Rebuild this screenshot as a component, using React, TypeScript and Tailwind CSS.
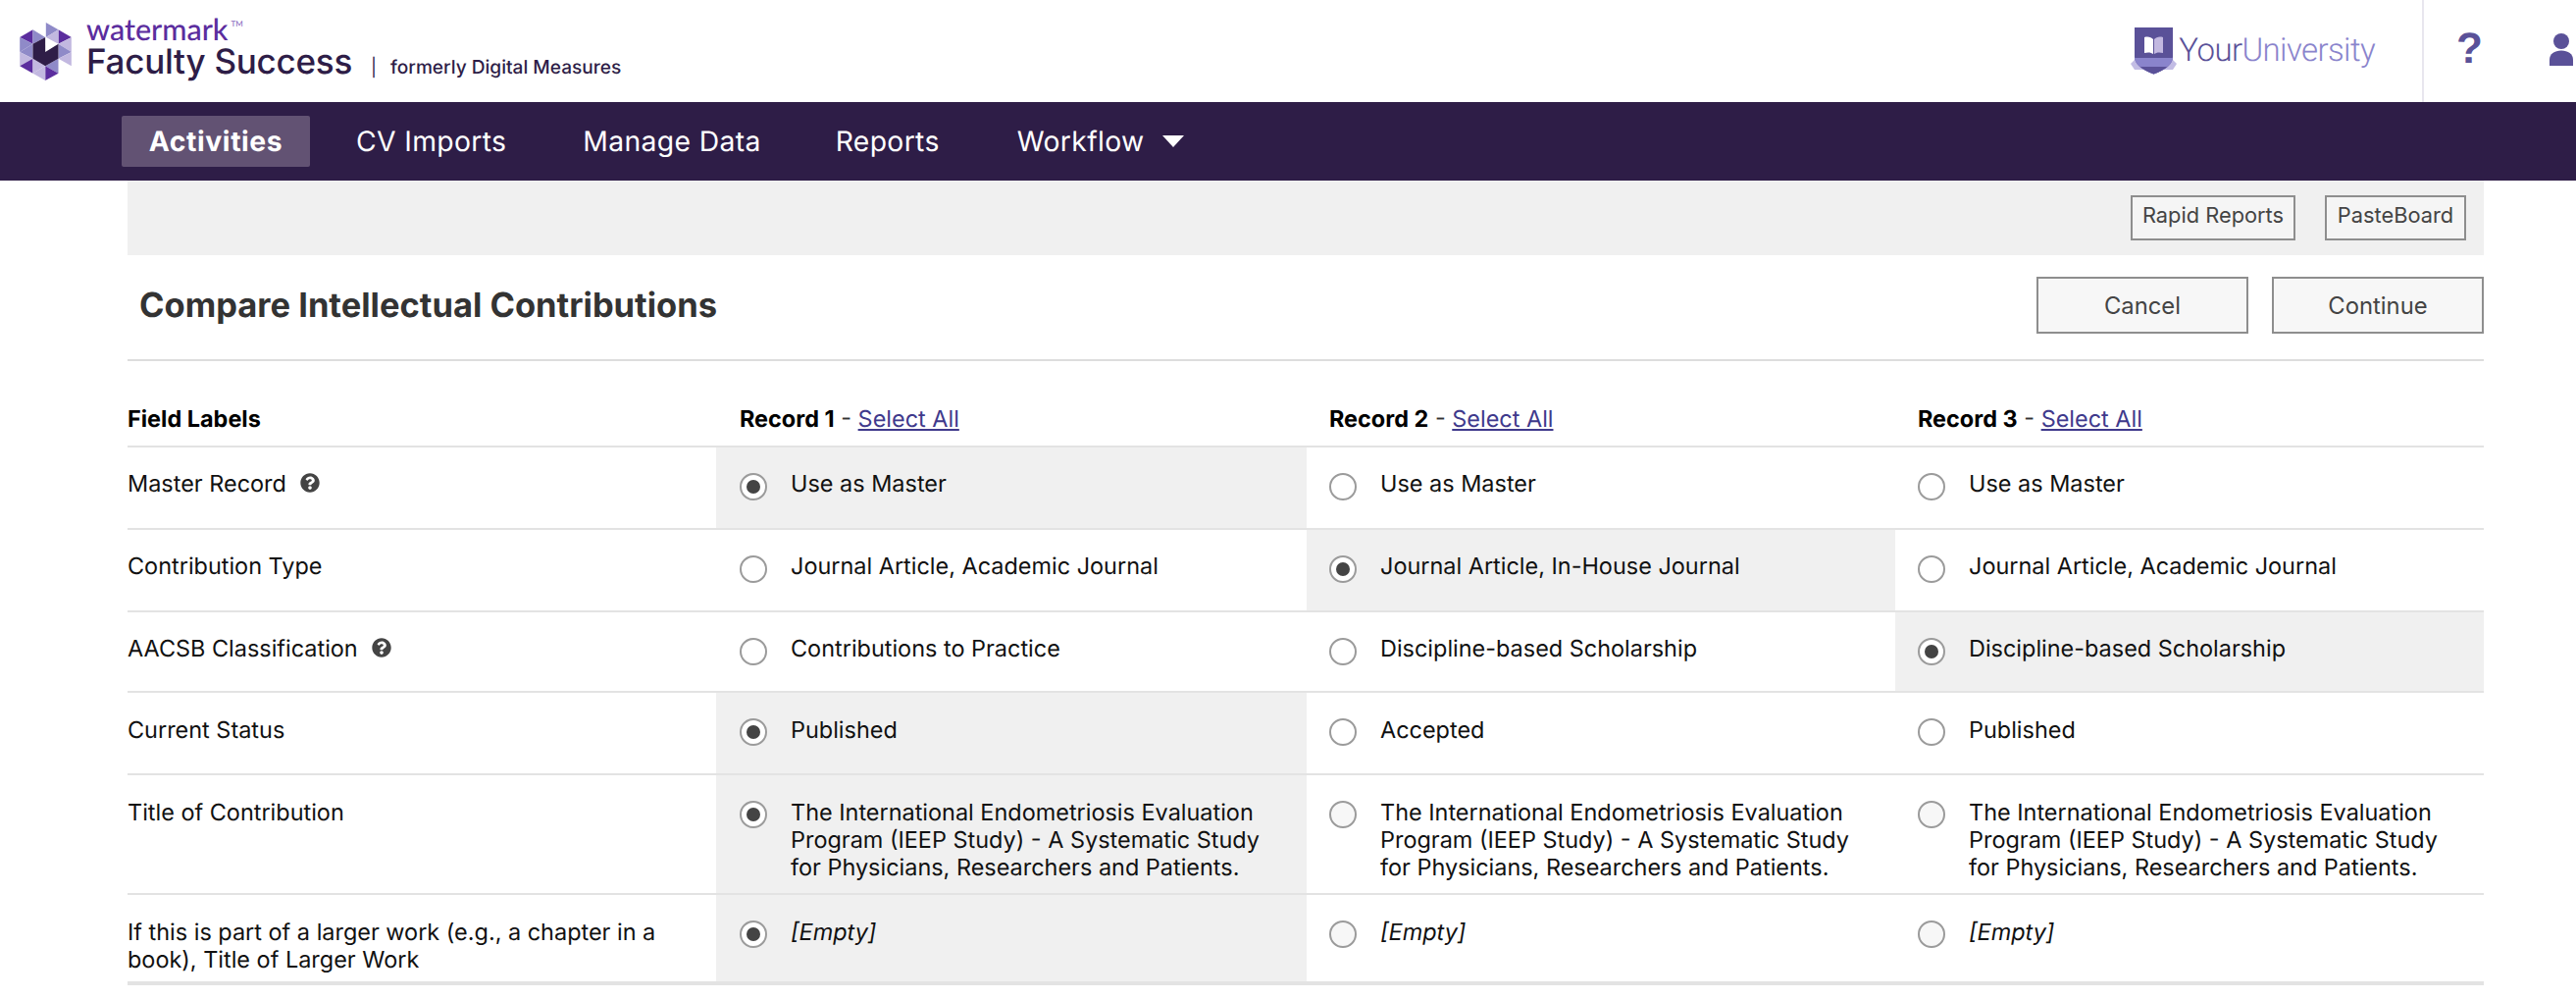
import { FaQuestionCircle } from 'react-icons/fa'

/* ── Watermark mark ── */
function WatermarkLogo() {
  const mid = '#8f8ac8'
  const light = '#c2b8e0'
  const purple = '#5b2d9e'
  const tris: [string, string][] = [
    ['110,35 148,57 110,80', mid],
    ['148,57 188,80 148,100', purple],
    ['70,57 30,80 70,100', purple],
    ['70,57 108,80 70,100', mid],
    ['148,57 110,80 148,100', light],
    ['188,80 188,125 148,100', light],
    ['188,125 148,100 148,145', mid],
    ['188,125 188,168 148,145', light],
    ['30,80 70,100 30,125', mid],
    ['30,125 70,100 70,145', mid],
    ['30,125 70,145 30,168', light],
    ['30,168 70,145 70,190', purple],
    ['70,145 108,168 70,190', light],
    ['108,168 148,145 148,190', mid],
    ['148,190 108,168 108,212', purple],
    ['70,190 108,168 108,212', light],
  ]
  return (
    <svg width="53" height="59" viewBox="30 35 158 177" className="shrink-0">
      {tris.map(([points, fill]) => (
        <polygon key={points} points={points} fill={fill} />
      ))}
      <polygon points="108,80 108,125 148,100 148,145 108,168 70,145 70,100" fill="#2e1d47" />
      <polygon points="110,80 128,92 110,104" fill="#ffffff" />
    </svg>
  )
}

function ShieldLogo() {
  return (
    <svg width="47" height="48" viewBox="0 0 47 48" className="shrink-0">
      <polygon points="0,37 7,30 40,30 47,37 43,43 4,43" fill="#c2bce4" />
      <path d="M4 0 H43 V30 C43 37 36 43 23.5 47.500 C11 43 4 37 4 30 Z" fill="#5a5198" />
      <path d="M4 31 H43 C42.500 37 36 43 23.500 47.500 C11 43 4.500 37 4 31 Z" fill="#8a84cc" />
      <path d="M23.500 47.500 C17 45 13 43 9.500 40 H37.500 C34 43 30 45 23.500 47.500 Z" fill="#5a5198" />
      <path d="M14 10 C18 9 21 10 23 12 V27 C21 25.500 18 25 14 26 Z" fill="#ffffff" />
      <path d="M33 10 C29 9 26 10 24 12 V27 C26 25.500 29 25 33 26 Z" fill="#c2b8e0" />
    </svg>
  )
}

function Header() {
  return (
    <header className="flex h-[104px] items-stretch bg-white">
      <div className="flex items-center pl-[20px]">
        <WatermarkLogo />
        <div className="mb-[4px] ml-[15px] flex flex-col">
          <div className="flex items-start font-['Lato',sans-serif] text-[30.500px] leading-[26px] font-medium text-[#5b2d9e]">
            watermark
            <span className="mt-[2px] ml-[3px] text-[8px] leading-[10px] text-[#8a6cc0]">TM</span>
          </div>
          <div className="flex items-baseline">
            <span className="text-[35px] leading-[40px] font-medium tracking-[-0.250px] text-[#2e1d47]">Faculty Success</span>
            <span className="ml-[19px] text-[18px] text-[#2e1d47]">|</span>
            <span className="ml-[14px] text-[19.100px] font-medium text-[#2e1d47]">formerly Digital Measures</span>
          </div>
        </div>
      </div>
      <div className="ml-auto flex items-center">
        <ShieldLogo />
        <span className="ml-[2px] font-['Roboto',sans-serif] text-[33px] font-light tracking-[-0.600px] text-[#5a5198]">
          Your<span className="text-[#8a84cc]">University</span>
        </span>
      </div>
      <div className="ml-[48px] flex w-[157px] items-center border-l-2 border-[#e8e6ee] pl-[33px]">
        <span className="mb-[4px] w-[27px] font-['Liberation_Sans',sans-serif] text-[44px] leading-[44px] font-bold text-[#5a5198]">?</span>
        <svg width="24" height="33" viewBox="0 0 24 33" className="mb-[3px] ml-[68px] shrink-0">
          <circle cx="12" cy="8" r="8" fill="#5a5198" />
          <path d="M0 33 V27 C0 21 5 17.500 12 17.500 C19 17.500 24 21 24 27 V33 Z" fill="#5a5198" />
        </svg>
      </div>
    </header>
  )
}

function Nav() {
  return (
    <nav className="flex h-[80px] items-center bg-[#2e1d47] pl-[124px] text-[28.300px] tracking-[0.350px] text-white">
      <a className="flex h-[52px] w-[192px] items-center justify-center rounded-[2px] bg-[#625273] font-bold tracking-[0.600px]">Activities</a>
      <a className="ml-[47px]">CV Imports</a>
      <a className="ml-[78px]">Manage Data</a>
      <a className="ml-[76px]">Reports</a>
      <a className="ml-[79px]">Workflow</a>
      <svg width="22" height="12" viewBox="0 0 22 12" className="ml-[18px]">
        <polygon points="0,0 22,0 11,12" fill="#ffffff" />
      </svg>
    </nav>
  )
}

function Radio({ checked, muted, low }: { checked?: boolean; muted?: boolean; low?: boolean }) {
  return (
    <span
      className={
        'flex h-[28px] w-[28px] shrink-0 items-center justify-center rounded-full border-2 border-[#9b9b9b] ' +
        (low ? 'mt-[3px] ' : 'mt-[2px] ') +
        (muted ? 'bg-[#f7f7f7]' : 'bg-white')
      }
    >
      {checked && <span className="h-[14px] w-[14px] rounded-full bg-[#444444]" />}
    </span>
  )
}

const TITLE = (
  <>
    The International Endometriosis Evaluation
    <br />
    Program (IEEP Study) - A Systematic Study
    <br />
    for Physicians, Researchers and Patients.
  </>
)

const rows = [
  {
    label: 'Master Record',
    help: true,
    selected: 0,
    values: ['Use as Master', 'Use as Master', 'Use as Master'],
    height: 'h-[84px]',
  },
  {
    label: 'Contribution Type',
    selected: 1,
    values: ['Journal Article, Academic Journal', 'Journal Article, In-House Journal', 'Journal Article, Academic Journal'],
    height: 'h-[84px]',
  },
  {
    label: 'AACSB Classification',
    help: true,
    selected: 2,
    values: ['Contributions to Practice', 'Discipline-based Scholarship', 'Discipline-based Scholarship'],
    height: 'h-[82px]',
  },
  {
    label: 'Current Status',
    selected: 0,
    values: ['Published', 'Accepted', 'Published'],
    height: 'h-[84px]',
  },
  {
    label: 'Title of Contribution',
    selected: 0,
    muted: true,
    values: [TITLE, TITLE, TITLE],
    height: 'h-[122px]',
  },
  {
    label: 'If this is part of a larger work (e.g., a chapter in a book), Title of Larger Work',
    selected: 0,
    muted: true,
    empty: true,
    values: ['[Empty]', '[Empty]', '[Empty]'],
    height: 'h-[92px]',
  },
]

function CompareTable() {
  return (
    <div className="text-[23.450px] leading-[28px] text-[#111111]">
      <div className="grid h-[88px] grid-cols-[600px_602px_600px_600px] items-end border-b-2 border-[#e3e3e3] pb-[13px]">
        <div className="font-bold text-black">Field Labels</div>
        {[1, 2, 3].map((n) => (
          <div key={n} className={n === 1 ? 'pl-[24px]' : 'pl-[23px]'}>
            <span className="font-bold text-black">Record {n}</span>
            <span className="text-[#333333]"> - </span>
            <a className="text-[#3f3a8c] underline">Select All</a>
          </div>
        ))}
      </div>
      {rows.map((row, r) => (
        <div
          key={row.label}
          className={
            'grid grid-cols-[600px_602px_600px_600px] ' +
            row.height +
            ' ' +
            (r === rows.length - 1 ? 'border-b-4 border-[#e3e3e3]' : 'border-b-2 border-[#e3e3e3]')
          }
        >
          <div className={'flex items-start pr-[50px] ' + (r > 2 ? 'pt-[24px]' : 'pt-[23px]')}>
            <span>{row.label}</span>
            {row.help && <FaQuestionCircle className="mt-[3px] ml-[14px] h-[20px] w-[20px] shrink-0 text-[#444444]" />}
          </div>
          {row.values.map((value, c) => (
            <div
              key={c}
              className={
                'flex items-start gap-[24px] ' +
                (r > 2 ? 'pt-[24px] ' : 'pt-[23px] ') +
                (c === 0 ? 'pl-[24px] ' : 'pl-[23px] ') +
                (row.selected === c ? 'bg-[#f0f0f0]' : '')
              }
            >
              <Radio checked={row.selected === c} muted={row.muted && row.selected !== c} low={r < 3} />
              <span className={row.empty ? 'italic' : ''}>{value}</span>
            </div>
          ))}
        </div>
      ))}
    </div>
  )
}

export default function App() {
  return (
    <div className="h-[1018px] overflow-hidden bg-white font-['Inter',sans-serif] [text-rendering:geometricPrecision]">
      <Header />
      <Nav />
      <main className="ml-[130px] w-[2402px]">
        {/* Toolbar */}
        <div className="flex h-[76px] items-center justify-end gap-[30px] bg-[#f0f0f0] pr-[18px] pb-[6px] pt-[6px] text-[21.800px] text-[#444444]">
          <button className="h-[46px] w-[168px] border-2 border-[#8e8e8e] bg-[#f5f5f5] pb-[6px]">Rapid Reports</button>
          <button className="h-[46px] w-[144px] border-2 border-[#8e8e8e] bg-[#f5f5f5] pb-[6px]">PasteBoard</button>
        </div>
        {/* Title bar */}
        <div className="flex h-[108px] items-center justify-between border-b-2 border-[#dddddd] pb-[4px] pl-[12px]">
          <h1 className="pt-[2px] text-[34.500px] font-bold text-[#333333]">Compare Intellectual Contributions</h1>
          <div className="flex gap-[24px] text-[23.800px] text-[#444444]">
            <button className="h-[58px] w-[216px] border-2 border-[#8e8e8e] bg-[#f7f7f7] pt-[2px]">Cancel</button>
            <button className="h-[58px] w-[216px] border-2 border-[#8e8e8e] bg-[#f7f7f7] pt-[2px]">Continue</button>
          </div>
        </div>
        <CompareTable />
      </main>
    </div>
  )
}
